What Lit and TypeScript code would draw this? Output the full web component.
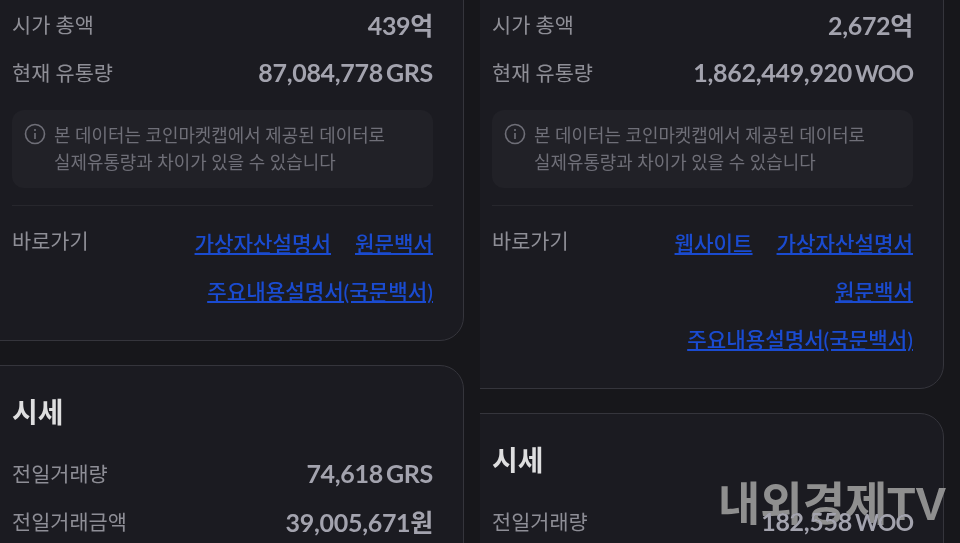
import { LitElement, html, css } from 'lit';
import { customElement } from 'lit/decorators.js';

interface Coin {
  cap: string;
  supply: string;
  symbol: string;
  narrowSymbol?: boolean;
  links: string[][];
  volume: string;
  amount?: string;
}

const COINS: Coin[] = [
  {
    cap: '439억',
    supply: '87,084,778',
    symbol: 'GRS',
    links: [['가상자산설명서', '원문백서'], ['주요내용설명서(국문백서)']],
    volume: '74,618',
    amount: '39,005,671원',
  },
  {
    cap: '2,672억',
    supply: '1,862,449,920',
    symbol: 'WOO',
    narrowSymbol: true,
    links: [['웹사이트', '가상자산설명서'], ['원문백서'], ['주요내용설명서(국문백서)']],
    volume: '182,558',
  },
];

@customElement('app-root')
export class AppRoot extends LitElement {
  static styles = css`
    :host {
      display: block;
      height: 543px;
      overflow: hidden;
      position: relative;
      background: #17171b;
      font-family: Lato, 'Noto Sans CJK KR', sans-serif;
    }

    .columns {
      display: grid;
      grid-template-columns: 480px 480px;
      margin-top: -59px;
    }

    .column {
      overflow: hidden;
      padding-right: 16px;
      display: flex;
      flex-direction: column;
      gap: 24px;
    }

    .card {
      margin-left: -24px;
      padding: 0 30px 36px 35px;
      background: #1b1b21;
      border: 1px solid #35353c;
      border-radius: 24px;
    }

    .card.info {
      padding-top: 70px;
    }

    .card.price {
      padding-top: 24px;
      height: 400px;
    }

    .row {
      display: flex;
      justify-content: space-between;
      align-items: center;
      height: 24px;
      margin-bottom: 24px;
    }

    .label {
      font-size: 20.8px;
      color: #8e8e96;
    }

    .value {
      margin-bottom: 1px;
      font-size: 25px;
      letter-spacing: -0.3px;
      font-weight: 700;
      color: #a3a3ae;
      white-space: nowrap;
    }

    .unit {
      margin-left: 3px;
    }

    .unit.narrow {
      font-size: 23px;
      letter-spacing: -1px;
    }

    .notice {
      display: flex;
      gap: 8px;
      padding: 12px;
      margin: 26px 0 17px;
      border-radius: 12px;
      background: #212127;
      font-size: 17.9px;
      line-height: 27px;
      color: #6f6f78;
    }

    .notice svg {
      flex: none;
      margin-top: 1px;
    }

    .divider {
      height: 1px;
      background: #27272d;
      margin-bottom: 26px;
    }

    .shortcuts {
      display: flex;
      justify-content: space-between;
    }

    .shortcuts .label {
      line-height: 24px;
      margin-top: -3px;
    }

    .links {
      display: flex;
      flex-direction: column;
      gap: 24px;
      align-items: flex-end;
    }

    .link-line {
      display: flex;
      gap: 24px;
    }

    a {
      font-size: 21.2px;
      font-weight: 500;
      line-height: 24px;
      color: #1a4bd0;
      text-decoration: underline;
      text-decoration-thickness: 2px;
    }

    h2 {
      margin: 0 0 27px;
      font-size: 28px;
      line-height: 44px;
      font-weight: 700;
      color: #dededf;
    }

    .watermark {
      position: absolute;
      left: 718px;
      top: 474px;
      font-family: 'Liberation Sans', 'Noto Sans CJK KR', sans-serif;
      font-size: 46px;
      line-height: 60px;
      font-weight: 700;
      color: #8f8f8f;
      mix-blend-mode: lighten;
      white-space: nowrap;
    }
  `;

  renderUnit(coin: Coin) {
    return html`<span class="unit ${coin.narrowSymbol ? 'narrow' : ''}">${coin.symbol}</span>`;
  }

  renderCoin(coin: Coin) {
    return html`
      <div class="column">
        <section class="card info">
          <div class="row">
            <span class="label">시가 총액</span>
            <span class="value">${coin.cap}</span>
          </div>
          <div class="row">
            <span class="label">현재 유통량</span>
            <span class="value">${coin.supply}${this.renderUnit(coin)}</span>
          </div>
          <div class="notice">
            <svg width="22" height="22" viewBox="0 0 22 22" fill="none" stroke="#6f6f78" stroke-width="1.6">
              <circle cx="11" cy="11" r="9.5"></circle>
              <path d="M11 10v6M11 6v2"></path>
            </svg>
            <div>본 데이터는 코인마켓캡에서 제공된 데이터로<br />실제유통량과 차이가 있을 수 있습니다</div>
          </div>
          <div class="divider"></div>
          <div class="shortcuts">
            <span class="label">바로가기</span>
            <div class="links">
              ${coin.links.map(
                (line) => html`<div class="link-line">${line.map((l) => html`<a href="#">${l}</a>`)}</div>`
              )}
            </div>
          </div>
        </section>
        <section class="card price">
          <h2>시세</h2>
          <div class="row">
            <span class="label">전일거래량</span>
            <span class="value">${coin.volume}${this.renderUnit(coin)}</span>
          </div>
          ${coin.amount
            ? html`<div class="row">
                <span class="label">전일거래금액</span>
                <span class="value">${coin.amount}</span>
              </div>`
            : ''}
        </section>
      </div>
    `;
  }

  render() {
    return html`
      <div class="columns">${COINS.map((coin) => this.renderCoin(coin))}</div>
      <div class="watermark">내외경제TV</div>
    `;
  }
}
